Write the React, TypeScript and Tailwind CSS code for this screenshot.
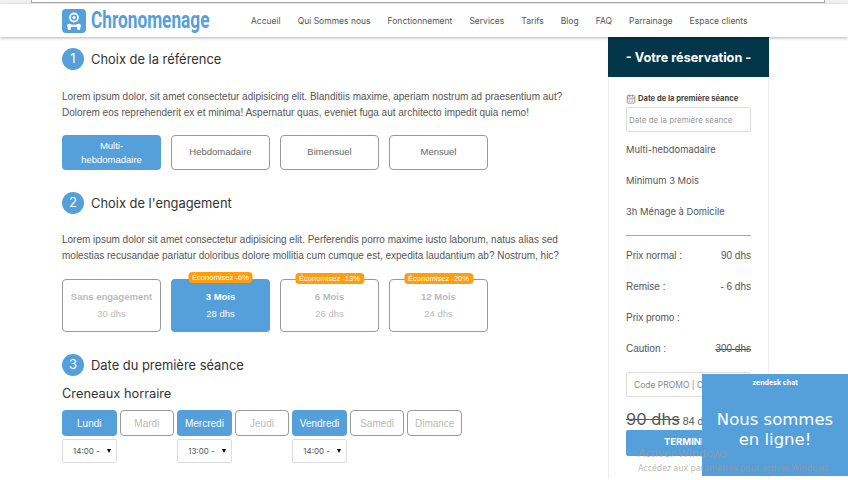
import React from "react";
import { CalendarDays } from "lucide-react";

const navLinks = ["Accueil", "Qui Sommes nous", "Fonctionnement", "Services", "Tarifs", "Blog", "FAQ", "Parrainage", "Espace clients"];

const plans = [
  { label: "Sans engagement", price: "30 dhs" },
  { label: "3 Mois", price: "28 dhs", badge: "Économisez -6%", active: true },
  { label: "6 Mois", price: "26 dhs", badge: "Économisez -13%" },
  { label: "12 Mois", price: "24 dhs", badge: "Économisez -20%" },
];

const days = [
  { name: "Lundi", time: "14:00 -" },
  { name: "Mardi" },
  { name: "Mercredi", time: "13:00 -" },
  { name: "Jeudi" },
  { name: "Vendredi", time: "14:00 -" },
  { name: "Samedi" },
  { name: "Dimance" },
];

const Logo = () => (
  <svg width="24" height="24" viewBox="0 0 24 24">
    <rect width="24" height="24" rx="4" fill="#559fdb" />
    <circle cx="12" cy="8.5" r="4" fill="none" stroke="#fff" strokeWidth="1.8" />
    <circle cx="12" cy="8.5" r="1.5" fill="#fff" />
    <path d="M7 14.5c3 1.6 7 1.6 10 0l2 1.5-1 5h-2.5l-.5-3H9l-.5 3H6l-1-5z" fill="#fff" />
  </svg>
);

const Heading = ({ n, children }: { n: number; children: React.ReactNode }) => (
  <div className="flex items-center gap-[7px]">
    <span className="flex h-[22px] w-[22px] items-center justify-center rounded-full bg-[#559fdb] font-['Inter',sans-serif] text-[13px] text-white">{n}</span>
    <h2 className="pt-[1px] font-['Inter',sans-serif] text-[12.9px] text-[#333]">{children}</h2>
  </div>
);

const Row = ({ label, value, strike }: { label: string; value?: string; strike?: boolean }) => (
  <div className="flex h-[31px] items-center justify-between text-[10px] text-[#555]">
    <span>{label}</span>
    {value && <span className={strike ? "line-through" : ""}>{value}</span>}
  </div>
);

const App = () => {
  return (
    <div className="relative h-[480px] w-[848px] overflow-hidden bg-white font-['Liberation_Sans',sans-serif]">
      <div className="h-[4px] bg-[#f1f1f1] px-[31px]">
        <div className="h-[3px] w-[794px] border-x border-b border-[#aaa] bg-white"></div>
      </div>

      <header className="relative z-10 flex h-[33px] items-center bg-white pl-[62px] shadow-[0_1px_3px_rgba(0,0,0,0.3)]">
        <Logo />
        <span className="ml-[5px] w-[149px] origin-left scale-x-[0.75] pt-[2px] font-['Roboto',sans-serif] text-[23px] font-bold whitespace-nowrap text-[#559fdb]">Chronomenage</span>
        <nav className="ml-[11px] flex gap-[17px] pt-[2px] font-['Inter',sans-serif] text-[8.5px] text-[#555]">
          {navLinks.map((link) => (
            <a key={link}>{link}</a>
          ))}
        </nav>
      </header>

      <main className="flex pl-[62px]">
        <section className="w-[546px] pt-[11px]">
          <Heading n={1}>Choix de la référence</Heading>
          <p className="mt-[19px] text-[10px] leading-[16px] whitespace-nowrap text-[#555]">
            Lorem ipsum dolor, sit amet consectetur adipisicing elit. Blanditiis maxime, aperiam nostrum ad praesentium aut?
            <br />
            Dolorem eos reprehenderit ex et minima! Aspernatur quas, eveniet fuga aut architecto impedit quia nemo!
          </p>
          <div className="mt-[14px] flex gap-[10px] text-[9.5px]">
            <button className="h-[35px] w-[99px] rounded-[4px] bg-[#559fdb] px-4 leading-[14px] text-white">Multi-hebdomadaire</button>
            <button className="h-[35px] w-[99px] rounded-[4px] border border-[#999] text-[#666]">Hebdomadaire</button>
            <button className="h-[35px] w-[99px] rounded-[4px] border border-[#999] text-[#666]">Bimensuel</button>
            <button className="h-[35px] w-[99px] rounded-[4px] border border-[#999] text-[#666]">Mensuel</button>
          </div>

          <div className="mt-[22px]">
            <Heading n={2}>Choix de l'engagement</Heading>
          </div>
          <p className="mt-[18px] text-[10px] leading-[16px] whitespace-nowrap text-[#555]">
            Lorem ipsum dolor sit amet consectetur adipisicing elit. Perferendis porro maxime iusto laborum, natus alias sed
            <br />
            molestias recusandae pariatur doloribus dolore mollitia cum cumque est, expedita laudantium ab? Nostrum, hic?
          </p>
          <div className="mt-[15px] flex gap-[10px]">
            {plans.map((plan) => (
              <div
                key={plan.label}
                className={`relative flex h-[53px] w-[99px] flex-col items-center justify-center gap-[2px] rounded-[4px] text-[9.5px] ${plan.active ? "bg-[#559fdb] text-white" : "border border-[#999] text-[#bbb]"}`}
              >
                {plan.badge && (
                  <span className="absolute top-[-7px] left-1/2 -translate-x-1/2 rounded-[4px] bg-[#ff9d0a] px-[4px] text-[7.6px] leading-[11px] whitespace-nowrap text-white">{plan.badge}</span>
                )}
                <strong>{plan.label}</strong>
                <span>{plan.price}</span>
              </div>
            ))}
          </div>

          <div className="mt-[22px]">
            <Heading n={3}>Date du première séance</Heading>
          </div>
          <h3 className="mt-[9px] font-['Inter',sans-serif] text-[12.8px] leading-[18px] text-[#333]">Creneaux horraire</h3>
          <div className="mt-[7px] grid w-[400px] grid-cols-7 gap-x-[3px] gap-y-[3px]">
            {days.map((day) => (
              <button
                key={day.name}
                className={`h-[26px] rounded-[4px] text-[10px] ${day.time ? "bg-[#559fdb] text-white" : "border border-[#999] text-[#bbb]"}`}
              >
                {day.name}
              </button>
            ))}
            {days.map((day) =>
              day.time ? (
                <div key={day.name} className="relative flex h-[24px] items-center rounded-[2px] border border-[#ddd] pl-[10px] font-['Inter',sans-serif] text-[8px] text-[#555]">
                  {day.time}
                  <span className="absolute top-[9px] right-[5px] h-0 w-0 border-x-[2.5px] border-t-[4px] border-x-transparent border-t-black"></span>
                </div>
              ) : (
                <div key={day.name}></div>
              ),
            )}
          </div>
        </section>

        <aside className="h-[442px] w-[161px] border-x border-[#eee]">
          <div className="-mx-px flex h-[40px] items-center justify-center bg-[#04364a] pt-[1px] font-['Inter',sans-serif] text-[12.7px] font-bold text-white">- Votre réservation -</div>
          <div className="px-[17px] pt-[16px]">
            <div className="flex items-center gap-[2px] font-['Inter',sans-serif] text-[7.6px] font-bold text-[#444]">
              <CalendarDays size={10} className="text-[#888]" />
              <span>Date de la première séance</span>
            </div>
            <input
              readOnly
              placeholder="Date de la première séance"
              className="mt-[3px] h-[25px] w-[125px] rounded-[2px] border border-[#ddd] px-[2px] font-['Inter',sans-serif] text-[8px] placeholder:text-[#999]"
            />
            <div className="mt-[2px] font-['Inter',sans-serif] text-[9.4px] text-[#555]">
              <p className="flex h-[31px] items-center">Multi-hebdomadaire</p>
              <p className="flex h-[31px] items-center">Minimum 3 Mois</p>
              <p className="flex h-[31px] items-center">3h Ménage à Domicile</p>
            </div>
            <div className="mt-[8px] mb-[4px] border-t border-[#7fb3dd]"></div>
            <Row label="Prix normal :" value="90 dhs" />
            <Row label="Remise :" value="- 6 dhs" />
            <Row label="Prix promo :" />
            <Row label="Caution :" value="300 dhs" strike />
            <input
              readOnly
              placeholder="Code PROMO | Code Parrainage"
              className="mt-[8px] h-[25px] w-[125px] rounded-[2px] border border-[#ddd] px-[7px] font-['Inter',sans-serif] text-[8.5px] placeholder:text-[#888]"
            />
            <div className="mt-[10px] flex h-[21px] items-baseline gap-[3px] whitespace-nowrap text-[#555]">
              <span className="font-['Inter',sans-serif] text-[16.5px] line-through">90 dhs</span>
              <span className="text-[10.5px]">84 dhs</span>
            </div>
            <button className="h-[26px] w-[125px] rounded-[2px] bg-[#559fdb] font-['Inter',sans-serif] text-[9.5px] font-bold text-white">TERMINER</button>
          </div>
        </aside>
      </main>

      {/* zendesk widget */}
      <div className="absolute top-[374px] left-[702px] h-[102px] w-[146px] bg-[#559fdb] text-center text-white">
        <p className="mt-[4px] font-['Inter',sans-serif] text-[7px] font-bold">zendesk chat</p>
        <p className="mt-[21px] font-['DejaVu_Sans',sans-serif] text-[16.5px] leading-[20px]">Nous sommes<br />en ligne!</p>
      </div>

      {/* windows watermark */}
      <div className="pointer-events-none absolute top-[446px] left-[638px] font-['Noto_Sans',sans-serif] whitespace-nowrap text-[#9a9a9a]/70">
        <p className="text-[11.5px] leading-[14px]">Activer Windows</p>
        <p className="mt-[1px] text-[8.7px] leading-[14px]">Accédez aux paramètres pour activer Windows.</p>
      </div>
    </div>
  );
};

export default App;
